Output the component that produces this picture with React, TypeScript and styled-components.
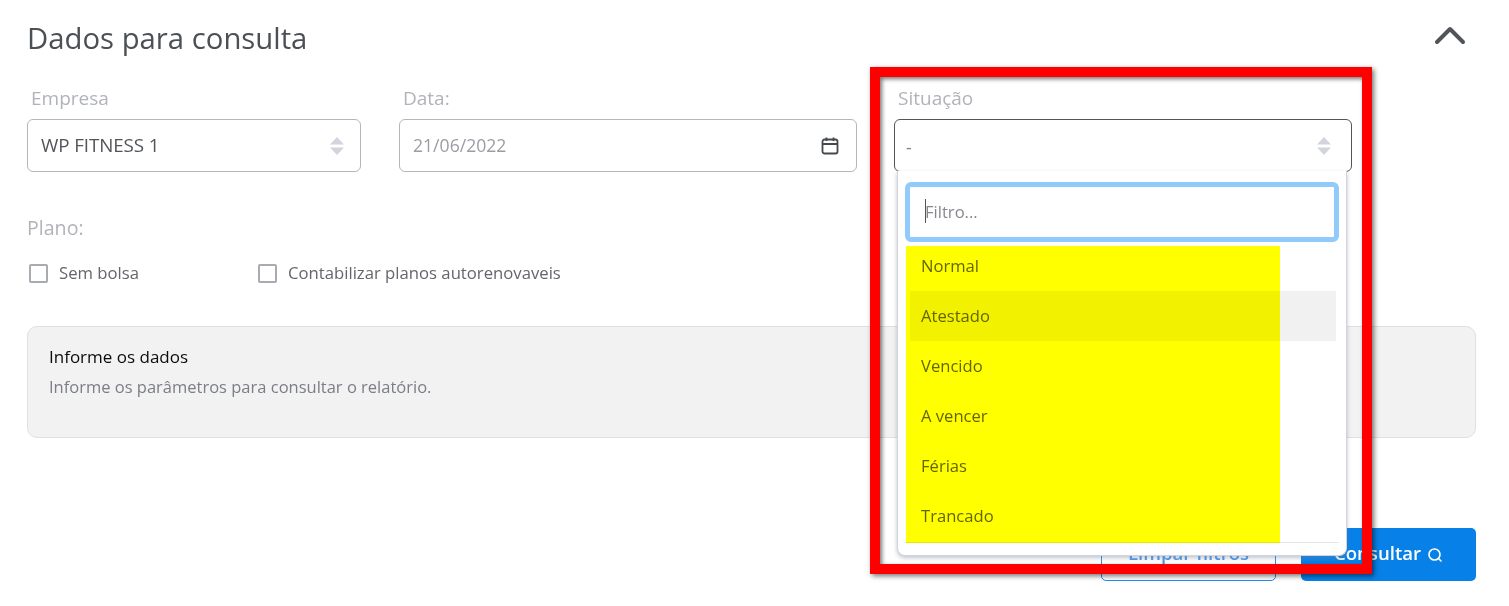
import React from "react";
import styled, { createGlobalStyle } from "styled-components";

const Global = createGlobalStyle`
  html, body { margin: 0; padding: 0; background: #fff; }
  body { font-family: "Open Sans", "Noto Sans", sans-serif; overflow: hidden; }
  * { box-sizing: border-box; }
`;

const Page = styled.div`
  position: relative;
  width: 1509px;
  height: 606px;
  padding: 0 33px 0 27px;
  overflow: hidden;
`;

const Header = styled.div`
  height: 77px;
  display: flex;
  align-items: center;
  justify-content: space-between;
`;

const Title = styled.h1`
  margin: 0;
  padding-bottom: 1px;
  font-size: 29.3px;
  line-height: 76px;
  font-weight: 500;
  color: #4c5055;
`;

const Collapse = styled.svg`
  width: 32px;
  height: 20px;
  margin-right: 10px;
  margin-top: -8px;
`;

const FieldRow = styled.div`
  display: grid;
  grid-template-columns: 334px 458px 458px;
  column-gap: 38px;
`;

const Field = styled.div<{ $nudge?: number }>`
  position: relative;
  left: ${(p) => p.$nudge ?? 0}px;
`;

const FieldLabel = styled.div<{ $inset: number }>`
  height: 42px;
  padding-left: ${(p) => p.$inset}px;
  font-size: 19px;
  line-height: 42px;
  color: #b1b3ba;
`;

const Control = styled.div<{ $active?: boolean }>`
  height: 53px;
  display: flex;
  align-items: center;
  justify-content: space-between;
  padding: 0 13px;
  background: #fff;
  border: 1px solid ${(p) => (p.$active ? "#51555a" : "#b4b6bd")};
  border-radius: 6px;
  font-size: 17.6px;
  color: ${(p) => (p.$active ? "#80838a" : "#9a9da3")};
`;

const ControlValue = styled.span<{ $dark?: boolean; $shift?: number; $drop?: number }>`
  color: ${(p) => (p.$dark ? "#51555a" : "inherit")};
  margin-left: ${(p) => p.$shift ?? 0}px;
  margin-top: ${(p) => p.$drop ?? 0}px;
  font-size: ${(p) => (p.$dark ? "18.8px" : "inherit")};
  letter-spacing: ${(p) => (p.$dark ? "-0.1px" : "0")};
`;

const Arrows = styled.svg<{ $gap: number }>`
  width: 16px;
  height: 20px;
  margin-right: ${(p) => p.$gap}px;
`;

const Calendar = styled.svg`
  width: 20px;
  height: 20px;
  margin-right: 3px;
`;

const PlanLabel = styled.div`
  margin-top: 39px;
  height: 34px;
  font-size: 19.6px;
  line-height: 34px;
  color: #b1b3ba;
`;

const Checks = styled.div`
  display: flex;
  margin-top: 16px;
  padding-left: 2px;
`;

const CheckItem = styled.label<{ $width?: number }>`
  display: flex;
  align-items: center;
  gap: 11px;
  width: ${(p) => (p.$width ? `${p.$width}px` : "auto")};
  font-size: 16.7px;
  line-height: 24px;
  color: #63666c;
`;

const CheckBox = styled.span`
  width: 19px;
  height: 19px;
  border: 2px solid #a9abb2;
  border-radius: 2px;
`;

const InfoBox = styled.div`
  margin-top: 41px;
  height: 112px;
  padding: 19px 21px;
  background: #f2f2f2;
  border: 1px solid #e0e0e0;
  border-radius: 10px;
`;

const InfoTitle = styled.div`
  font-size: 17px;
  line-height: 22px;
  font-weight: 500;
  color: #0b0b0b;
`;

const InfoText = styled.div`
  margin-top: 8px;
  font-size: 16.5px;
  line-height: 22px;
  color: #7b7e85;
`;

const Actions = styled.div`
  display: flex;
  justify-content: flex-end;
  gap: 25px;
  margin-top: 90px;
`;

const Outline = styled.button`
  width: 175px;
  height: 53px;
  padding: 0 0 5px;
  background: #fff;
  border: 1px solid #1e90f0;
  border-radius: 5px;
  color: #4a9bee;
  font: 600 18.6px "Open Sans", sans-serif;
`;

const Primary = styled.button`
  width: 175px;
  height: 53px;
  padding: 0 0 5px;
  display: flex;
  align-items: center;
  justify-content: center;
  gap: 6px;
  background: #0781e8;
  border: 0;
  border-radius: 5px;
  color: #fff;
  font: 600 18.6px "Open Sans", sans-serif;
`;

const SearchIcon = styled.svg`
  width: 16px;
  height: 16px;
  margin-top: 6px;
`;

const Menu = styled.div`
  position: absolute;
  top: 94px;
  left: 3px;
  width: 450px;
  height: 385px;
  padding: 11px 7px;
  background: #fff;
  border: 1px solid #d2d4dc;
  border-top: 0;
  border-radius: 0 0 8px 8px;
  box-shadow: 0 2px 4px rgba(120, 125, 150, 0.45);
  z-index: 2;
`;

const FilterInput = styled.div`
  height: 60px;
  display: flex;
  align-items: center;
  padding: 0 0 2px 15px;
  border: 5px solid #90cbfb;
  border-radius: 6px;
  font-size: 16.6px;
  color: #85888e;
`;

const Caret = styled.span`
  width: 1px;
  height: 24px;
  margin-right: -1px;
  background: #555;
`;

const Options = styled.div`
  margin-top: -1px;
  border-bottom: 1px solid #e6e6e6;
  padding-bottom: 1px;
`;

const Option = styled.div<{ $hover?: boolean }>`
  height: 50px;
  margin: 0 3px 0 5px;
  padding: 0 0 2px 11px;
  display: flex;
  align-items: center;
  font-size: 16.6px;
  color: #63666c;
  background: ${(p) => (p.$hover ? "#f1f1f1" : "transparent")};
`;

const Highlight = styled.div`
  position: absolute;
  left: 906px;
  top: 246px;
  width: 374px;
  height: 297px;
  background: #ffff00;
  mix-blend-mode: multiply;
  z-index: 3;
`;

const RedFrame = styled.div`
  position: absolute;
  left: 870px;
  top: 67px;
  width: 502px;
  height: 507px;
  border: 10px solid #ff0000;
  box-shadow: 2px 2px 5px rgba(0, 0, 0, 0.55), inset 2px 2px 4px rgba(0, 0, 0, 0.55);
  z-index: 4;
`;

const ArrowsIcon = ({ gap }: { gap: number }) => (
  <Arrows viewBox="0 0 16 20" $gap={gap}>
    <path d="M8 1 L15 8.5 H1 Z M1 11.5 H15 L8 19 Z" fill="#d2d4de" />
  </Arrows>
);

const options = ["Normal", "Atestado", "Vencido", "A vencer", "Férias", "Trancado"];

export default function App() {
  return (
    <Page>
      <Global />
      <Header>
        <Title>Dados para consulta</Title>
        <Collapse viewBox="0 0 32 20">
          <path d="M3 17 L16 4 L29 17" fill="none" stroke="#51555a" strokeWidth="4" strokeLinecap="round" strokeLinejoin="round" />
        </Collapse>
      </Header>
      <FieldRow>
        <Field>
          <FieldLabel $inset={4}>Empresa</FieldLabel>
          <Control>
            <ControlValue $dark $drop={-1}>WP FITNESS 1</ControlValue>
            <ArrowsIcon gap={2} />
          </Control>
        </Field>
        <Field>
          <FieldLabel $inset={4}>Data:</FieldLabel>
          <Control>
            <ControlValue $drop={-1}>21/06/2022</ControlValue>
            <Calendar viewBox="0 0 20 20">
              <rect x="2.5" y="3.5" width="15" height="14" rx="2" fill="none" stroke="#44494e" strokeWidth="1.8" />
              <path d="M2.5 8 H17.5 M6.5 1.5 V5 M13.5 1.5 V5" fill="none" stroke="#44494e" strokeWidth="1.8" />
            </Calendar>
          </Control>
        </Field>
        <Field $nudge={-1}>
          <FieldLabel $inset={4}>Situação</FieldLabel>
          <Control $active>
            <ControlValue $shift={-2} $drop={2}>-</ControlValue>
            <ArrowsIcon gap={6} />
          </Control>
          <Menu>
            <FilterInput>
              <Caret />
              Filtro...
            </FilterInput>
            <Options>
              {options.map((o) => (
                <Option key={o} $hover={o === "Atestado"}>
                  {o}
                </Option>
              ))}
            </Options>
          </Menu>
        </Field>
      </FieldRow>
      <PlanLabel>Plano:</PlanLabel>
      <Checks>
        <CheckItem $width={229}>
          <CheckBox />
          Sem bolsa
        </CheckItem>
        <CheckItem>
          <CheckBox />
          Contabilizar planos autorenovaveis
        </CheckItem>
      </Checks>
      <InfoBox>
        <InfoTitle>Informe os dados</InfoTitle>
        <InfoText>Informe os parâmetros para consultar o relatório.</InfoText>
      </InfoBox>
      <Actions>
        <Outline>Limpar filtros</Outline>
        <Primary>
          Consultar
          <SearchIcon viewBox="0 0 16 16">
            <circle cx="7.5" cy="7.5" r="5.5" fill="none" stroke="#fff" strokeWidth="1.6" />
            <path d="M11.5 11.5 L14 14" stroke="#fff" strokeWidth="1.6" strokeLinecap="round" />
          </SearchIcon>
        </Primary>
      </Actions>
      <Highlight />
      <RedFrame />
    </Page>
  );
}
